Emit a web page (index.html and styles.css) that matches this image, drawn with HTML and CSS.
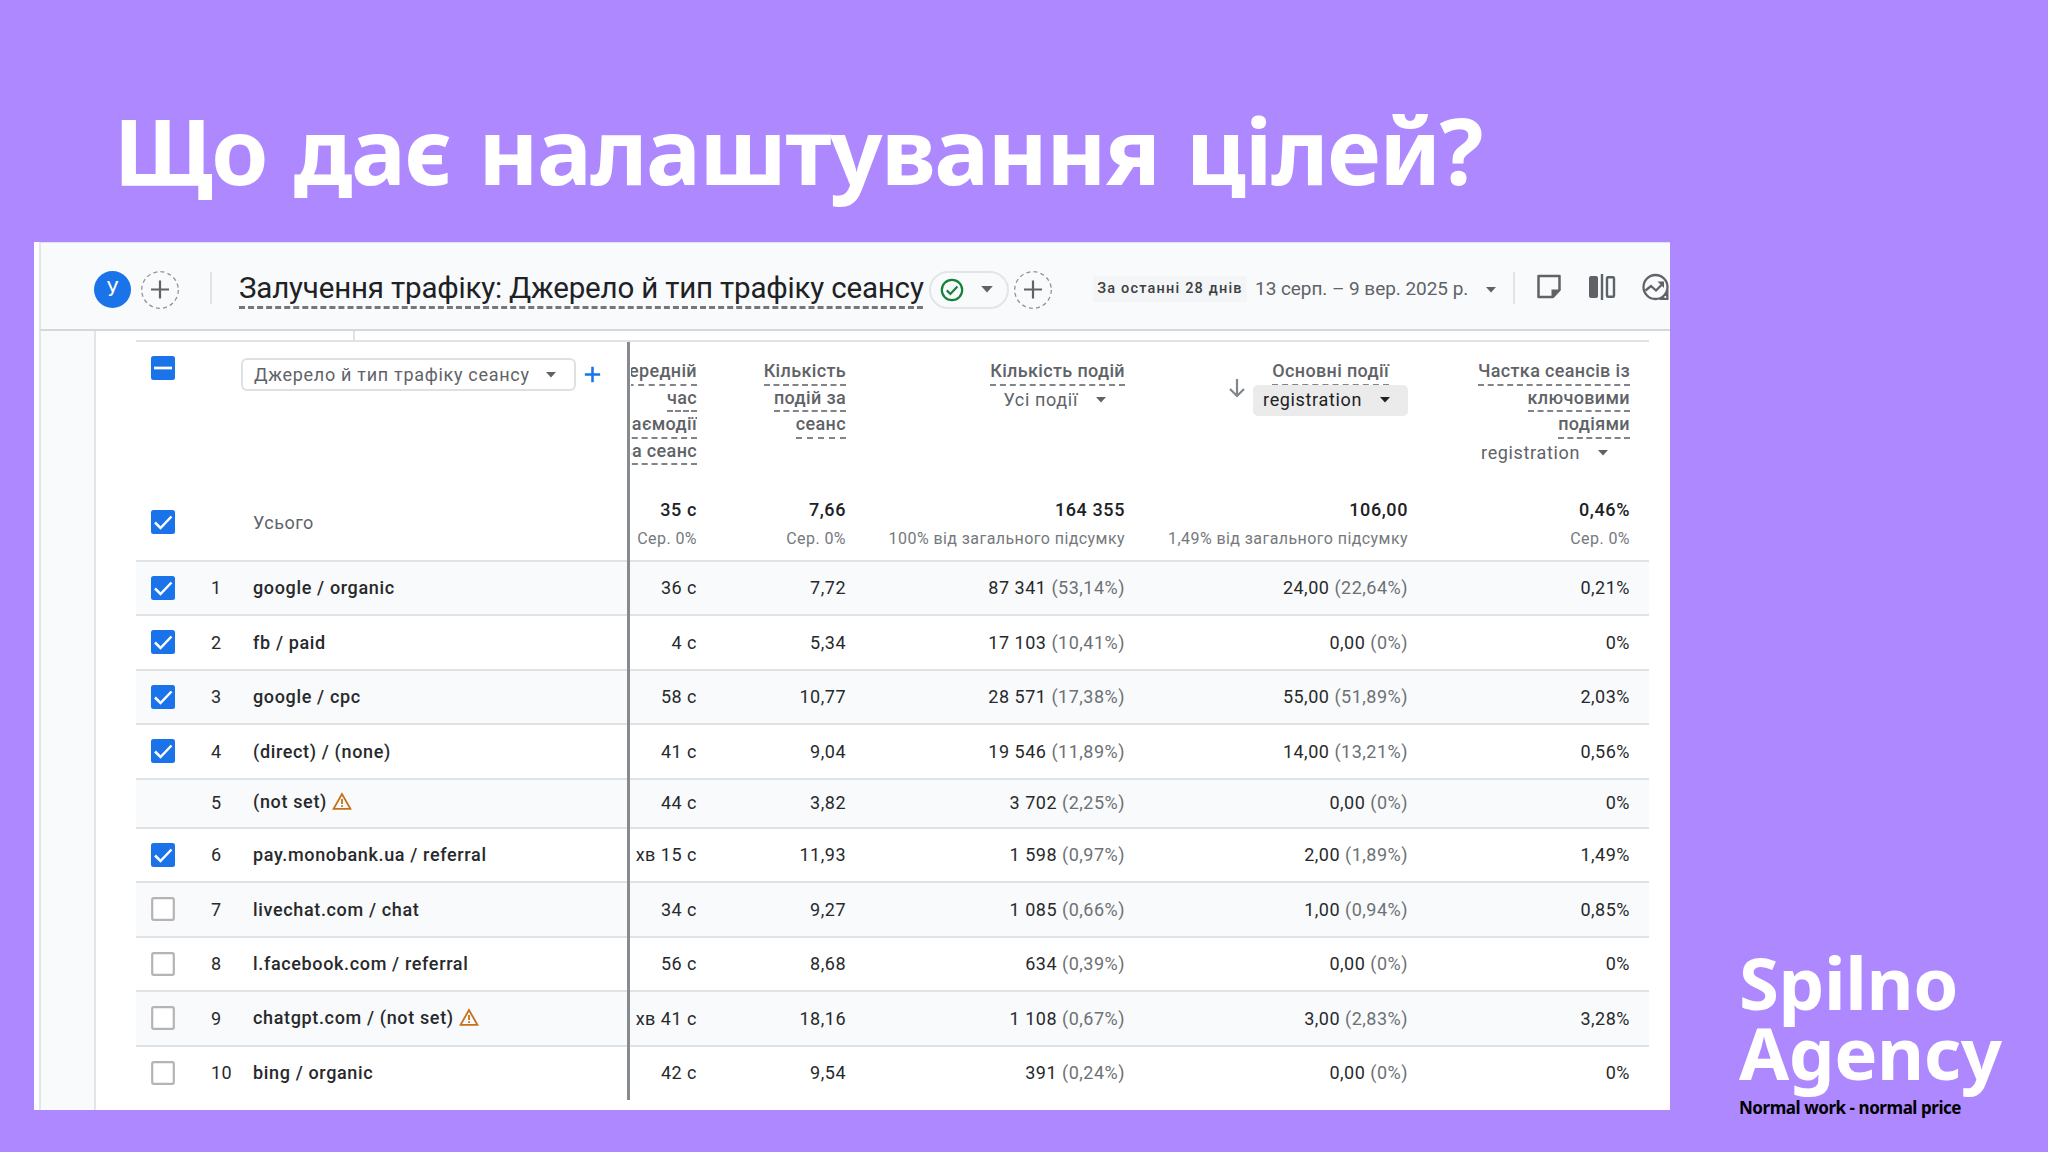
FILE: index.html
```
<!DOCTYPE html>
<html lang="uk">
<head>
    <meta charset="UTF-8">
    <meta name="viewport" content="width=device-width, initial-scale=1.0">
    <title>Що дає налаштування цілей?</title>
    <link rel="stylesheet" href="styles.css">
</head>
<body>
    <svg class="sprite" width="0" height="0">
        <symbol id="check-on" viewBox="0 0 24 24"><rect width="24" height="24" rx="2.5" fill="#1a73e8"/><path d="M4 12.5l5.5 5.5L20.5 6.5" fill="none" stroke="#fff" stroke-width="2.5"/></symbol>
        <symbol id="check-mixed" viewBox="0 0 24 24"><rect width="24" height="24" rx="2.5" fill="#1a73e8"/><path d="M3 12h18" stroke="#fff" stroke-width="2.7"/></symbol>
        <symbol id="check-off" viewBox="0 0 24 24"><rect x="1.2" y="1.2" width="21.6" height="21.6" rx="1.5" fill="#fff" stroke="#b4b4b4" stroke-width="2.2"/></symbol>
        <symbol id="caret" viewBox="0 0 10 6"><path d="M0 0h10L5 5.5z" fill="currentColor"/></symbol>
        <symbol id="plus" viewBox="0 0 20 20"><path d="M10 1v18M1 10h18" stroke="currentColor"/></symbol>
        <symbol id="add-circle" viewBox="0 0 38 38"><circle cx="19" cy="19" r="18.3" fill="none" stroke="#909498" stroke-width="1.3" stroke-dasharray="4 3.18"/><path d="M19 9.5v18M10 18.5h18" stroke="#5f6368" stroke-width="2.2"/></symbol>
        <symbol id="warn" viewBox="0 0 20 18"><path d="M10 2L1.6 16.8h16.8z" fill="none" stroke="#c5711a" stroke-width="1.8"/><path d="M10 7v5M10 13.2v1.8" stroke="#c5711a" stroke-width="1.8"/></symbol>
    </svg>

    <h1 class="slide-title">Що дає налаштування цілей?</h1>

    <div class="slide-body">
        <div class="panel">
            <div class="topbar">
                <div class="avatar">У</div>
                <svg class="add-circle" width="38" height="38"><use href="#add-circle"/></svg>
                <div class="divider"></div>
                <div class="report-title">Залучення трафіку: Джерело й тип трафіку сеансу</div>
                <div class="status">
                    <svg width="24" height="24" viewBox="0 0 24 24" fill="none" stroke="#188038" stroke-width="2.2"><circle cx="12" cy="12" r="10.2"/><path d="M6.8 12.4l3.6 3.6 7-7.4"/></svg>
                    <svg class="caret" width="12" height="7"><use href="#caret"/></svg>
                </div>
                <svg class="add-circle" width="38" height="38"><use href="#add-circle"/></svg>
                <div class="period">За останні 28 днів</div>
                <div class="dates">13 серп. – 9 вер. 2025 р.</div>
                <svg class="caret" width="10" height="6"><use href="#caret"/></svg>
                <div class="divider right"></div>
                <svg class="tool" width="26" height="26" viewBox="0 0 26 26"><path d="M2.5 2h21v14L17 23H2.5z" fill="none" stroke="#5f6368" stroke-width="2.5" stroke-linejoin="round"/><path d="M15.5 24v-8.5h9z" fill="#5f6368"/></svg>
                <svg class="tool compare" width="28" height="28" viewBox="0 0 28 28"><rect x="1" y="3" width="9" height="22" rx="2" fill="#5f6368"/><path d="M14 1v26" stroke="#5f6368" stroke-width="2.4"/><rect x="19" y="4.2" width="7" height="19.6" rx="1" fill="none" stroke="#5f6368" stroke-width="2.4"/></svg>
                <svg class="tool" width="27" height="28" viewBox="0 0 27 28"><circle cx="13.5" cy="14" r="12" fill="none" stroke="#5f6368" stroke-width="2.3"/><path d="M3.5 17.5L9 13l5 4.5 6-6" fill="none" stroke="#5f6368" stroke-width="2.3"/><path d="M15.5 8.5H22V15z" fill="#5f6368"/><path d="M26.5 17v10H17z" fill="#5f6368"/><circle cx="23.3" cy="24" r="1.1" fill="#fff"/></svg>
            </div>

            <div class="content">
                <div class="tab-strip"></div>
                <div class="table">
                    <div class="row head">
                        <svg class="box" width="24" height="24"><use href="#check-mixed"/></svg>
                        <div class="dimension">
                            <div class="select">Джерело й тип трафіку сеансу <svg width="10" height="6"><use href="#caret"/></svg></div>
                            <svg class="add" width="17" height="17"><use href="#plus"/></svg>
                        </div>
                        <div class="cell clip"><span>Середній</span><span>час</span><span>взаємодії</span><span>за сеанс</span></div>
                        <div class="cell"><span>Кількість</span><span>подій за</span><span>сеанс</span></div>
                        <div class="cell"><span>Кількість подій</span><div class="pick">Усі події <svg width="10" height="6"><use href="#caret"/></svg></div></div>
                        <div class="cell sorted">
                            <svg class="sort" width="18" height="19" viewBox="0 0 18 19" fill="none" stroke="#80868b" stroke-width="2.2"><path d="M9 0v16.5M2 10l7 7 7-7"/></svg>
                            <div class="sorted-text"><span>Основні події</span><div class="pick active">registration <svg width="10" height="6"><use href="#caret"/></svg></div></div>
                        </div>
                        <div class="cell"><span>Частка сеансів із</span><span>ключовими</span><span>подіями</span><div class="pick rate">registration <svg width="10" height="6"><use href="#caret"/></svg></div></div>
                    </div>
                    <div class="row total">
                        <svg class="box" width="24" height="24"><use href="#check-on"/></svg>
                        <div class="total-name">Усього</div>
                        <div class="cell clip"><b>35 с</b><small>Сер. 0%</small></div>
                        <div class="cell"><b>7,66</b><small>Сер. 0%</small></div>
                        <div class="cell"><b>164 355</b><small>100% від загального підсумку</small></div>
                        <div class="cell"><b>106,00</b><small>1,49% від загального підсумку</small></div>
                        <div class="cell"><b>0,46%</b><small>Сер. 0%</small></div>
                    </div>
                    <div class="row odd">
                        <svg class="box" width="24" height="24"><use href="#check-on"/></svg>
                        <div>1</div><div class="name">google / organic</div>
                        <div class="num clip">36 с</div><div class="num">7,72</div>
                        <div class="num">87 341 <i>(53,14%)</i></div><div class="num">24,00 <i>(22,64%)</i></div><div class="num">0,21%</div>
                    </div>
                    <div class="row">
                        <svg class="box" width="24" height="24"><use href="#check-on"/></svg>
                        <div>2</div><div class="name">fb / paid</div>
                        <div class="num clip">4 с</div><div class="num">5,34</div>
                        <div class="num">17 103 <i>(10,41%)</i></div><div class="num">0,00 <i>(0%)</i></div><div class="num">0%</div>
                    </div>
                    <div class="row odd">
                        <svg class="box" width="24" height="24"><use href="#check-on"/></svg>
                        <div>3</div><div class="name">google / cpc</div>
                        <div class="num clip">58 с</div><div class="num">10,77</div>
                        <div class="num">28 571 <i>(17,38%)</i></div><div class="num">55,00 <i>(51,89%)</i></div><div class="num">2,03%</div>
                    </div>
                    <div class="row">
                        <svg class="box" width="24" height="24"><use href="#check-on"/></svg>
                        <div>4</div><div class="name">(direct) / (none)</div>
                        <div class="num clip">41 с</div><div class="num">9,04</div>
                        <div class="num">19 546 <i>(11,89%)</i></div><div class="num">14,00 <i>(13,21%)</i></div><div class="num">0,56%</div>
                    </div>
                    <div class="row odd short">
                        <div></div>
                        <div>5</div><div class="name warned">(not set) <svg width="20" height="18"><use href="#warn"/></svg></div>
                        <div class="num clip">44 с</div><div class="num">3,82</div>
                        <div class="num">3 702 <i>(2,25%)</i></div><div class="num">0,00 <i>(0%)</i></div><div class="num">0%</div>
                    </div>
                    <div class="row">
                        <svg class="box" width="24" height="24"><use href="#check-on"/></svg>
                        <div>6</div><div class="name">pay.monobank.ua / referral</div>
                        <div class="num clip">хв 15 с</div><div class="num">11,93</div>
                        <div class="num">1 598 <i>(0,97%)</i></div><div class="num">2,00 <i>(1,89%)</i></div><div class="num">1,49%</div>
                    </div>
                    <div class="row odd">
                        <svg class="box" width="24" height="24"><use href="#check-off"/></svg>
                        <div>7</div><div class="name">livechat.com / chat</div>
                        <div class="num clip">34 с</div><div class="num">9,27</div>
                        <div class="num">1 085 <i>(0,66%)</i></div><div class="num">1,00 <i>(0,94%)</i></div><div class="num">0,85%</div>
                    </div>
                    <div class="row">
                        <svg class="box" width="24" height="24"><use href="#check-off"/></svg>
                        <div>8</div><div class="name">l.facebook.com / referral</div>
                        <div class="num clip">56 с</div><div class="num">8,68</div>
                        <div class="num">634 <i>(0,39%)</i></div><div class="num">0,00 <i>(0%)</i></div><div class="num">0%</div>
                    </div>
                    <div class="row odd">
                        <svg class="box" width="24" height="24"><use href="#check-off"/></svg>
                        <div>9</div><div class="name warned">chatgpt.com / (not set) <svg width="20" height="18"><use href="#warn"/></svg></div>
                        <div class="num clip">хв 41 с</div><div class="num">18,16</div>
                        <div class="num">1 108 <i>(0,67%)</i></div><div class="num">3,00 <i>(2,83%)</i></div><div class="num">3,28%</div>
                    </div>
                    <div class="row last">
                        <svg class="box" width="24" height="24"><use href="#check-off"/></svg>
                        <div>10</div><div class="name">bing / organic</div>
                        <div class="num clip">42 с</div><div class="num">9,54</div>
                        <div class="num">391 <i>(0,24%)</i></div><div class="num">0,00 <i>(0%)</i></div><div class="num">0%</div>
                    </div>
                    <div class="freeze-line"></div>
                </div>
            </div>
        </div>

        <div class="brand">
            <div class="brand-name">Spilno</div>
            <div class="brand-name">Agency</div>
            <div class="tagline">Normal work - normal price</div>
        </div>
    </div>
</body>
</html>
```
FILE: styles.css
```
* {
    box-sizing: border-box;
}

body {
    margin: 0;
    width: 2048px;
    height: 1152px;
    overflow: hidden;
    background-color: #ae88fe;
    font-family: Roboto, Arial, sans-serif;
    display: flex;
    flex-direction: column;
}

.sprite {
    display: none;
}

.slide-title {
    margin: 0;
    height: 242px;
    padding: 88px 0 0 114px;
    color: white;
    font: bold 92px/124px "Noto Sans", sans-serif;
    letter-spacing: -1.6px;
    word-spacing: 5px;
    white-space: nowrap;
}

.slide-body {
    display: flex;
    padding-left: 34px;
    height: 878px;
}

/* Report panel */
.panel {
    width: 1636px;
    height: 868px;
    background-color: white;
    overflow: hidden;
    display: flex;
    flex-direction: column;
}

.topbar {
    height: 89px;
    margin-left: 5px;
    padding: 7px 0 0 55px;
    border-top: 1px solid #e4e0f0;
    border-left: 2px solid #e3e6e9;
    border-bottom: 2px solid #d5d8db;
    background-color: #f8fafb;
    display: flex;
    align-items: center;
    flex: none;
}

.topbar > * {
    flex: none;
}

.avatar {
    width: 37px;
    height: 37px;
    margin-left: -2px;
    border-radius: 50%;
    background-color: #1a73e8;
    color: white;
    font-size: 20px;
    line-height: 36px;
    text-align: center;
}

.add-circle {
    margin-left: 10px;
}

.divider {
    width: 2px;
    height: 32px;
    margin: -4px 0 0 31px;
    background-color: #e0e3e6;
}

.report-title {
    width: 684px;
    height: 41px;
    margin: -3px 0 0 27px;
    border-bottom: 3px dashed #74787c;
    color: #202124;
    font-size: 29.5px;
    letter-spacing: -0.18px;
    line-height: 41px;
    white-space: nowrap;
}

.status {
    width: 80px;
    height: 38px;
    margin-left: 6px;
    padding: 0 14px 0 9px;
    border: 2px solid #e3e5e8;
    border-radius: 19px;
    display: flex;
    align-items: center;
    justify-content: space-between;
}

.caret {
    color: #5f6368;
}

.status + .add-circle {
    margin-left: 5px;
}

.period {
    width: 154px;
    height: 26px;
    margin: -1px 0 0 41px;
    background-color: #f3f5f6;
    color: #3c4043;
    font-size: 14.5px;
    font-weight: 500;
    letter-spacing: 1.2px;
    line-height: 26px;
    text-align: center;
    white-space: nowrap;
}

.dates {
    width: 212px;
    margin: -3px 0 0 8px;
    color: #5f6368;
    font-size: 19px;
    letter-spacing: -0.05px;
    white-space: nowrap;
}

.dates + .caret {
    margin-left: 19px;
}

.divider.right {
    margin-left: 17px;
}

.tool {
    margin: -6px 0 0 21px;
}

.tool.compare {
    margin-left: 26px;
}

.compare + .tool {
    margin-left: 26px;
}

/* Table area */
.content {
    flex: 1;
    margin-left: 5px;
    border-left: 2px solid #e3e6e9;
    background: linear-gradient(to right, #f8fafb 53px, #e3e6e9 53px, #e3e6e9 55px, white 55px);
    padding-left: 95px;
}

.tab-strip {
    width: 219px;
    height: 9px;
    border-right: 2px solid #dfe2e5;
}

.table {
    position: relative;
    width: 1513px;
    border-top: 2px solid #e0e2e4;
    color: #27292c;
    font-size: 18px;
    letter-spacing: 0.5px;
}

.row {
    display: grid;
    grid-template-columns: 75px 42px 378px 66px 149px 279px 283px 222px;
    align-items: center;
    height: 54.5px;
    padding-bottom: 1px;
    border-bottom: 2px solid #e0e3e5;
    white-space: nowrap;
}

.row.odd {
    background-color: #f8fafb;
}

.row.short {
    height: 49.2px;
}

.row.last {
    height: 53px;
    border-bottom: none;
}

.box {
    margin-left: 15px;
}

.name {
    font-weight: 500;
    letter-spacing: 0.65px;
}

.warned {
    padding-bottom: 2px;
}

.warned svg {
    vertical-align: -2px;
}

.num {
    text-align: right;
}

.num i {
    color: #6d7175;
    font-style: normal;
}

.clip {
    overflow: hidden;
}

/* Column headings */
.row.head {
    height: 138px;
    align-items: start;
    border-bottom: none;
    grid-template-columns: 105px 390px 66px 149px 279px 283px 222px;
}

.head .box {
    margin-top: 14px;
}

.dimension {
    display: flex;
    align-items: center;
    padding-top: 16px;
}

.select {
    width: 335px;
    height: 33px;
    padding: 0 18px 0 11px;
    border: 2px solid #dee0e2;
    border-radius: 6px;
    color: #5f6368;
    letter-spacing: 0.7px;
    line-height: 29px;
    display: flex;
    align-items: center;
    justify-content: space-between;
}

.add {
    margin-left: 8px;
    color: #1a73e8;
    stroke-width: 3;
}

.cell {
    display: flex;
    flex-direction: column;
    align-items: flex-end;
}

.head .cell {
    padding-top: 17px;
    color: #5f6368;
}

.head span {
    height: 26.6px;
    border-bottom: 2px dashed #808488;
    font-weight: 500;
    letter-spacing: 0.35px;
    line-height: 24px;
}

.pick {
    height: 31px;
    padding: 0 19px 0 10px;
    border-radius: 5px;
    letter-spacing: 0.65px;
    line-height: 28px;
    display: flex;
    align-items: center;
    gap: 18px;
    margin-top: -1px;
}

.pick.active {
    background-color: #ebebeb;
    color: #202124;
    padding-right: 18px;
}

.pick.rate {
    padding-right: 22px;
}

.head .sorted {
    flex-direction: row;
    align-items: flex-start;
    justify-content: flex-end;
    gap: 7px;
}

.sort {
    margin-top: 20px;
}

.sorted-text {
    display: flex;
    flex-direction: column;
    align-items: flex-end;
}

.sorted-text span {
    margin-right: 19px;
}

/* Totals */
.row.total {
    height: 81.8px;
    grid-template-columns: 117px 378px 66px 149px 279px 283px 222px;
}

.total .box {
    margin-top: 6px;
}

.total-name {
    padding-top: 6px;
    color: #5f6368;
}

.total .cell {
    padding-top: 10px;
}

.total b {
    color: #202124;
    font-size: 18px;
    font-weight: 500;
    letter-spacing: 0.6px;
    line-height: 30px;
}

.total small {
    color: #75797d;
    font-size: 16px;
    letter-spacing: 0.43px;
    line-height: 28px;
}

/* Sits over the row borders where the frozen columns end */
.freeze-line {
    position: absolute;
    left: 491px;
    top: 0;
    width: 3px;
    height: 758px;
    background-color: #868b8f;
}

/* Brand block */
.brand {
    margin: auto 0 0 69px;
    font-family: "Noto Sans", sans-serif;
    font-weight: bold;
}

.brand-name {
    color: white;
    font-size: 72.5px;
    letter-spacing: -0.4px;
    line-height: 70px;
}

.tagline {
    margin-top: 9px;
    color: black;
    font-size: 17px;
    letter-spacing: -0.45px;
    line-height: 24px;
}
```
